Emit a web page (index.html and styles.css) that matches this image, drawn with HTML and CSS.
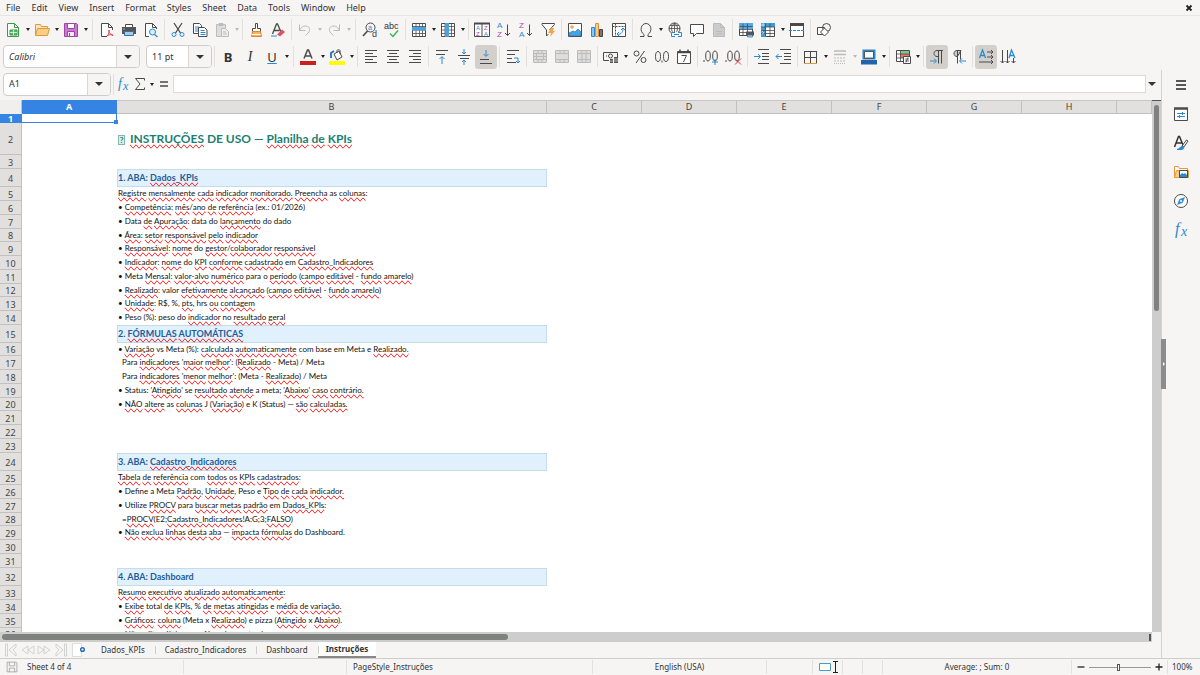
FILE: index.html
```html
<!DOCTYPE html>
<html lang="pt-BR">
<head>
<meta charset="utf-8">
<title>Planilha de KPIs</title>
<link rel="stylesheet" href="styles.css">
</head>
<body>
<header class="menubar">
  <nav class="menus">
    <button>File</button><button>Edit</button><button>View</button><button>Insert</button><button>Format</button><button>Styles</button><button>Sheet</button><button>Data</button><button>Tools</button><button>Window</button><button>Help</button>
  </nav>
  <button class="close" aria-label="Close document"><svg viewBox="0 0 8 8"><path d="M1.500 1.500l5 5M6.500 1.500l-5 5" stroke="#222" stroke-width="1.800"/></svg></button>
</header>

<div class="toolbar">
  <button class="tool" aria-label="New"><svg viewBox="0 0 16 16"><path d="M2.500 1.500h7l4 4v9h-11z" fill="#fff" stroke="#3a9a4a"/><path d="M9.500 1.500v4h4" stroke="#3a9a4a"/><path d="M5 8h7v5H5z" fill="#5cb56a" stroke="#3a9a4a"/><path d="M5 10.500h7M8.500 8v5" stroke="#fff" stroke-width=".7"/></svg></button><button class="drop" aria-label="New options"></button>
  <button class="tool" aria-label="Open"><svg viewBox="0 0 16 16"><path d="M1.500 13.500v-11h5l1 2h6v2" fill="#fbe3b6" stroke="#dd9a3c"/><path d="M1.500 13.500l2-7h12l-2 7z" fill="#f9cf87" stroke="#dd9a3c"/></svg></button><button class="drop" aria-label="Open options"></button>
  <button class="tool" aria-label="Save"><svg viewBox="0 0 16 16"><path d="M1.500 1.500h12l1 1v12h-13z" fill="#c77ad0" stroke="#9b45a8"/><path d="M4.500 1.500h7v5h-7z" fill="#fff" stroke="#9b45a8"/><path d="M4.500 9.500h7v5h-7z" fill="#f5e6f7" stroke="#9b45a8"/><path d="M6.500 11v3.500" stroke="#9b45a8"/></svg></button><button class="drop" aria-label="Save options"></button>
  <span class="sep wide"></span>
  <button class="tool" aria-label="Export as PDF"><svg viewBox="0 0 16 16"><path d="M8 14.500H2.500v-13h7l4 4V8" fill="#fff"/><path d="M9.500 1.500v4h4"/><path d="M8 14c2-2 3-6 2-6s0 4 4 5.500c1-1-4-1.500-6 .5z" stroke="#d9414e"/></svg></button>
  <button class="tool" aria-label="Print"><svg viewBox="0 0 16 16"><path d="M4.500 5V2.500h7V5" fill="#fff"/><path d="M1 5h14v7H1z" fill="#555" stroke="none"/><path d="M3.500 9.500h9v4h-9z" fill="#9fcdf0" stroke="#3d6f99"/><path d="M2.500 7h1" stroke="#fff"/></svg></button>
  <button class="tool" aria-label="Print preview"><svg viewBox="0 0 16 16"><path d="M6 14.500H2.500v-13h7l4 4V7" fill="#fff"/><path d="M9.500 1.500v4h4"/><circle cx="9.500" cy="10" r="3" fill="#d8ecfa" stroke="#2a8ad0"/><path d="M11.500 12.500l3 2.500" stroke="#2a8ad0" stroke-width="1.300"/></svg></button>
  <span class="sep"></span>
  <button class="tool" aria-label="Cut"><svg viewBox="0 0 16 16"><path d="M4 1l6.500 10M12 1L5.500 11" stroke-width="1.300"/><circle cx="4" cy="12.500" r="2" stroke="#2a8ad0"/><circle cx="12" cy="12.500" r="2" stroke="#2a8ad0"/></svg></button>
  <button class="tool" aria-label="Copy"><svg viewBox="0 0 16 16"><path d="M1.500 1.500h6l2 2v8h-8z" fill="#fff"/><path d="M3 5h4M3 7h3M3 9h3" stroke="#2a8ad0"/><path d="M6.500 5.500h6l2.500 2.500v6.500H6.500z" fill="#fff"/><path d="M8.500 8.500h4M8.500 10.500h5M8.500 12.500h5" stroke="#2a8ad0"/></svg></button>
  <button class="tool off" aria-label="Paste" disabled><svg viewBox="0 0 16 16"><path d="M7 14.500H2.500v-12h9V6" fill="#ddd"/><path d="M5 1.500h4v2H5z" fill="#bbb"/><path d="M7.500 6.500h4l3 3v5h-7z" fill="#eee"/><path d="M9 10h3M9 12h4"/></svg></button><button class="drop off" aria-label="Paste options" disabled></button>
  <span class="sep"></span>
  <button class="tool" aria-label="Clone formatting"><svg viewBox="0 0 16 16"><path d="M7.500 1.500h2v5h3v3h-8v-3h3z" fill="#fff"/><path d="M4.500 9.500h8l1 5h-10z" fill="#f7b267" stroke="#d98a2b"/><path d="M3.500 12.500h9" stroke="#fff"/></svg></button>
  <button class="tool" aria-label="Clear formatting"><svg viewBox="0 0 16 16"><path d="M2.500 12L6.500 2h1L11 10M4 8.500h5.500" stroke-width="1.300"/><path d="M1 14h6" stroke="#2a8ad0"/><path d="M7 12.500l5-5 3 2.500-5 4.500z" fill="#e05260" stroke="none"/></svg></button>
  <span class="sep"></span>
  <button class="tool off" aria-label="Undo" disabled><svg viewBox="0 0 16 16"><path d="M2.500 2.500v6h6M2.500 8.500c2-6 11-6 10 0-.3 2-2 3-4 5"/></svg></button><button class="drop off" aria-label="Undo history" disabled></button>
  <button class="tool off" aria-label="Redo" disabled><svg viewBox="0 0 16 16"><path d="M13.500 2.500v6h-6M13.500 8.500c-2-6-11-6-10 0 .3 2 2 3 4 5"/></svg></button><button class="drop off" aria-label="Redo history" disabled></button>
  <span class="sep wide"></span>
  <button class="tool" aria-label="Find and replace"><svg viewBox="0 0 16 16"><circle cx="8.500" cy="5.500" r="4.500"/><path d="M5.500 9L1 14" stroke-width="1.600"/><text x="6" y="8" font-size="7" fill="#2a8ad0">a</text><text x="10" y="15" font-size="9" fill="#444">d</text></svg></button>
  <button class="tool" aria-label="Spelling"><svg viewBox="0 0 16 16"><text x="0" y="7" font-size="9" fill="#333">abc</text><path d="M6 11.500l3 3 5-6" stroke="#35b558" stroke-width="1.400"/></svg></button>
  <span class="sep"></span>
  <button class="tool" aria-label="Row"><svg viewBox="0 0 16 16"><path d="M1.500 1.500h13v13h-13z" fill="#fff"/><path d="M1.500 4.500h13M1.500 11.500h13M5 1.500v13M8.500 1.500v13M11.500 1.500v13M1.500 8h13" stroke-width=".8"/><path d="M1 5h14v3.500H1z" fill="#4aa3e0" stroke="none"/></svg></button><button class="drop" aria-label="Row options"></button>
  <button class="tool" aria-label="Column"><svg viewBox="0 0 16 16"><path d="M1.500 1.500h13v13h-13z" fill="#fff"/><path d="M1.500 4.500h13M1.500 11.500h13M5 1.500v13M8.500 1.500v13M11.500 1.500v13M1.500 8h13" stroke-width=".8"/><path d="M5 1h4v14H5z" fill="#4aa3e0" stroke="none"/></svg></button><button class="drop" aria-label="Column options"></button>
  <span class="sep"></span>
  <button class="tool" aria-label="Sort"><svg viewBox="0 0 16 16"><path d="M.500 1.500h15v13H.500zM8 2v12.500" fill="#fff"/><path d="M0 1.500h16" stroke-width="2"/><text x="2" y="8" font-size="6" fill="#2a8ad0">A</text><text x="2" y="14" font-size="6" fill="#a84bb5">Z</text><text x="10" y="8" font-size="6" fill="#a84bb5">Z</text><text x="10" y="14" font-size="6" fill="#2a8ad0">A</text></svg></button>
  <button class="tool" aria-label="Sort ascending"><svg viewBox="0 0 16 16"><text x="1" y="6" font-size="8" fill="#2a8ad0">A</text><text x="1" y="15" font-size="8" fill="#a84bb5">Z</text><path d="M11.500 2.500v11M9 11l2.500 2.500L14 11"/></svg></button>
  <button class="tool" aria-label="Sort descending"><svg viewBox="0 0 16 16"><text x="1" y="6" font-size="8" fill="#a84bb5">Z</text><text x="1" y="15" font-size="8" fill="#2a8ad0">A</text><path d="M11.500 2.500v11M9 11l2.500 2.500L14 11"/></svg></button>
  <button class="tool" aria-label="AutoFilter"><svg viewBox="0 0 16 16"><path d="M2 1.500h12.500v1L9.500 8M2 1.500v1L6.500 8v6l2-2" fill="#fff"/><path d="M11 6h3l-1 3h2l-5 6 1-4H8z" fill="#f5a54c" stroke="none"/></svg></button>
  <span class="sep"></span>
  <button class="tool" aria-label="Insert image"><svg viewBox="0 0 16 16"><path d="M1.500 1.500h13v13h-13z" fill="#fff"/><circle cx="5" cy="5" r="1.500" fill="#f5b55c" stroke="#e09a3c" stroke-width=".5"/><path d="M2 14v-3l4-2 2 1 3-3 3 3v4z" fill="#4aa3e0" stroke="#1d75b8" stroke-width=".7"/></svg></button>
  <button class="tool" aria-label="Insert chart"><svg viewBox="0 0 16 16"><path d="M2.500 5.500h3v9h-3z" fill="#8cc8f0" stroke="#2a8ad0"/><path d="M6.500 1.500h3v13h-3z" fill="#f9c98a" stroke="#dd913c"/><path d="M10.500 7.500h3v7h-3z" fill="#777" stroke="#444"/></svg></button>
  <button class="tool" aria-label="Pivot table"><svg viewBox="0 0 16 16"><path d="M1.500 1.500h13v13h-13z" fill="#fff"/><path d="M1.500 4.500h13M4.500 1.500v13" stroke-dasharray="2 1"/><path d="M6 12c3 1 6-1 6-5M10 8l2-2 2 2M8 10l-2 2 2 2" stroke="#2a8ad0"/></svg></button>
  <span class="sep"></span>
  <button class="tool" aria-label="Special character"><svg viewBox="0 0 16 16"><path d="M2 14.500h4v-2C1 9 3 1.500 8 1.500S15 9 10 12.500v2h4"/></svg></button><button class="drop" aria-label="Symbols"></button>
  <button class="tool" aria-label="Hyperlink"><svg viewBox="0 0 16 16"><circle cx="7.500" cy="6.500" r="5.500"/><path d="M2 6.500h11M7.500 1v10M3 3.500h9M7.500 1c-4 3-4 8 0 11M7.500 1c4 3 4 8 0 11" stroke-width=".8"/><path d="M4 10h11v5H4z" fill="#f6f5f4" stroke="none"/><path d="M8 10.500H4.500v4H8M11 10.500h3.500v4H11M7 12.500h5" stroke="#2a8ad0"/></svg></button>
  <button class="tool" aria-label="Comment"><svg viewBox="0 0 16 16"><path d="M1.500 2.500h13v9h-7l-3 3v-3h-3z" fill="#fff"/></svg></button>
  <button class="tool off" aria-label="Headers and footers" disabled><svg viewBox="0 0 16 16"><path d="M2.500 1.500h7l4 4v9h-11z" fill="#ccc"/><path d="M9.500 1.500v4h4M5 9.500h6M5 12h6"/></svg></button>
  <span class="sep"></span>
  <button class="tool" aria-label="Print area"><svg viewBox="0 0 16 16"><path d="M1.500 1.500h13v12h-13z" fill="#fff"/><path d="M1 1h14v6H1z" fill="#55aae5" stroke="none"/><path d="M1.500 4.500h13M1.500 7.500h13M1.500 10.500h13M5 1.500v12M9.500 1.500v12" stroke-width=".8"/><path d="M8 9.500h8v4H8z" fill="#555" stroke="none"/><path d="M9.500 13h5v2h-5z" fill="#9fcdf0" stroke="#3d6f99" stroke-width=".7"/></svg></button>
  <button class="tool" aria-label="Freeze rows and columns"><svg viewBox="0 0 16 16"><path d="M1.500 1.500h13v13h-13z" fill="#fff"/><path d="M1 1h14v4H6v10H1z" fill="#3d9bdc" stroke="none"/><path d="M1.500 5h13M1.500 8.500h13M1.500 11.500h13M5.500 1.500v13M10 1.500v13" stroke-width=".8"/><path d="M1 3h4M3 1v4M2 9l2 2M2 12l2-1" stroke="#fff" stroke-width=".6"/></svg></button><button class="drop" aria-label="Freeze options"></button>
  <button class="tool" aria-label="Split window"><svg viewBox="0 0 16 16"><path d="M1.500 2.500h13v12h-13z" fill="#fff"/><path d="M1 2.500h14" stroke-width="3"/><path d="M0 8.500h16" stroke="#2a8ad0" stroke-dasharray="3 1"/></svg></button>
  <span class="sep"></span>
  <button class="tool" aria-label="Draw functions"><svg viewBox="0 0 16 16"><path d="M1.500 5.500h7v7h-7z" fill="#fff"/><circle cx="10.500" cy="5.500" r="4"/><path d="M8.500 6l4 4-4 4-4-4z" fill="#fff"/></svg></button>
</div>

<div class="toolbar format">
  <div class="combo font"><input value="Calibri" aria-label="Font name"><button aria-label="Font list"></button></div>
  <div class="combo size"><input value="11 pt" aria-label="Font size"><button aria-label="Size list"></button></div>
  <span class="sep"></span>
  <button class="tool letter" aria-label="Bold"><b>B</b></button>
  <button class="tool letter" aria-label="Italic"><i>I</i></button>
  <button class="tool letter" aria-label="Underline"><u>U</u></button><button class="drop" aria-label="Underline options"></button>
  <span class="sep wide"></span>
  <button class="tool" aria-label="Font color"><svg viewBox="0 0 16 16"><path d="M4 9.500L7.500 1h1L12 9.500M5.500 7h5" stroke-width="1.500"/><path d="M0 12h16v4H0z" fill="#c9211e" stroke="none"/></svg></button><button class="drop" aria-label="Font color palette"></button>
  <button class="tool" aria-label="Highlighting"><svg viewBox="0 0 16 16"><path d="M2 9V4l3-2" stroke="#1d75b8" stroke-width="1.800"/><path d="M5 5l5-3 3 6-5 3zM8 4V1.500c0-1 3-1 3 0V5" fill="#fff"/><path d="M0 12h16v4H0z" fill="#ffff00" stroke="none"/></svg></button><button class="drop" aria-label="Highlighting palette"></button>
  <span class="sep"></span>
  <button class="tool" aria-label="Align left"><svg viewBox="0 0 16 16"><path d="M2 1.500h12M2 4.500h8M2 7.500h12M2 10.500h8M2 13.500h12"/></svg></button>
  <button class="tool" aria-label="Align center"><svg viewBox="0 0 16 16"><path d="M2 1.500h12M4 4.500h8M2 7.500h12M4 10.500h8M2 13.500h12"/></svg></button>
  <button class="tool" aria-label="Align right"><svg viewBox="0 0 16 16"><path d="M2 1.500h12M6 4.500h8M2 7.500h12M6 10.500h8M2 13.500h12"/></svg></button>
  <span class="sep"></span>
  <button class="tool" aria-label="Align top"><svg viewBox="0 0 16 16"><path d="M2 1.500h12M2 5.500h9"/><path d="M8 15V8M5.500 10L8 7.500l2.500 2.500" stroke="#2a8ad0"/></svg></button>
  <button class="tool" aria-label="Center vertically"><svg viewBox="0 0 16 16"><path d="M2 6.500h12M4 9.500h9"/><path d="M8 0v5M6 3l2 2 2-2M8 16v-5M6 13l2-2 2 2" stroke="#2a8ad0"/></svg></button>
  <button class="tool on" aria-label="Align bottom" aria-pressed="true"><svg viewBox="0 0 16 16"><path d="M2 10.500h9M2 14.500h12"/><path d="M8 1v6M5.500 5L8 7.500 10.500 5" stroke="#2a8ad0"/></svg></button>
  <span class="sep"></span>
  <button class="tool" aria-label="Wrap text"><svg viewBox="0 0 16 16"><path d="M2 1.500h12M2 5.500h8M2 9.500h5M2 13.500h9"/><path d="M9 9h4v5M11 12l2 2 2-2" stroke="#2a8ad0"/></svg></button>
  <span class="sep"></span>
  <button class="tool off" aria-label="Merge and center" disabled><svg viewBox="0 0 16 16"><path d="M1.500 1.500h13v12h-13z" fill="#ddd"/><path d="M1.500 4.500h13M1.500 7.500h13M1.500 10.500h13M6 1.500v3M10 1.500v3M6 10.500v3M10 10.500v3M4.500 4.500v6M11.500 4.500v6"/></svg></button>
  <button class="tool off" aria-label="Merge cells" disabled><svg viewBox="0 0 16 16"><path d="M1.500 1.500h13v12h-13z" fill="#ddd"/><path d="M1.500 4.500h13M1.500 10.500h13M6 1.500v3M10 1.500v3M6 10.500v3M10 10.500v3"/></svg></button>
  <button class="tool off" aria-label="Unmerge cells" disabled><svg viewBox="0 0 16 16"><path d="M1.500 1.500h13v12h-13z" fill="#ddd"/><path d="M1.500 4.500h13M1.500 10.500h13M6 1.500v12M10 1.500v12"/></svg></button>
  <span class="sep"></span>
  <button class="tool" aria-label="Format as currency"><svg viewBox="0 0 16 16"><path d="M6 11.500H.500v-8h14V8"/><circle cx="7.500" cy="7" r="2"/><path d="M3 7h1"/><path d="M7 10h3v4H7zM11 8h4v6h-4z" fill="#555" stroke="none"/><path d="M7 12h3M11 10h4M11 12h4" stroke="#f6f5f4" stroke-width=".6"/></svg></button><button class="drop" aria-label="Currency options"></button>
  <button class="tool" aria-label="Format as percent"><svg viewBox="0 0 16 16"><circle cx="4.500" cy="4.500" r="2.500"/><circle cx="11.500" cy="11" r="2.500"/><path d="M12.500 2L4 14"/></svg></button>
  <button class="tool" aria-label="Format as number"><svg viewBox="0 0 16 16"><ellipse cx="4" cy="7.500" rx="2.500" ry="5"/><ellipse cx="12" cy="7.500" rx="2.500" ry="5"/><path d="M8 11.500v2"/></svg></button>
  <button class="tool" aria-label="Format as date"><svg viewBox="0 0 16 16"><path d="M1.500 2.500h13v12h-13z" fill="#fff"/><path d="M1.500 3.500h13M4 .500v2M12 .500v2" stroke-width="1.500"/><path d="M5.500 6.500h5l-3 6.500"/></svg></button>
  <span class="sep"></span>
  <button class="tool" aria-label="Add decimal place"><svg viewBox="0 0 16 16"><ellipse cx="5" cy="7" rx="2.300" ry="5"/><ellipse cx="12" cy="7" rx="2.300" ry="5"/><path d="M1 11v2"/><path d="M12 10v6M9 13h6" stroke="#2a8ad0"/></svg></button>
  <button class="tool" aria-label="Delete decimal place"><svg viewBox="0 0 16 16"><ellipse cx="5" cy="7" rx="2.300" ry="5"/><ellipse cx="12" cy="7" rx="2.300" ry="5"/><path d="M1 11v2"/><path d="M10 9.500l6 6M16 9.500l-6 6" stroke="#e0343f"/></svg></button>
  <span class="sep wide"></span>
  <button class="tool" aria-label="Increase indent"><svg viewBox="0 0 16 16"><path d="M4 .500h11M8 4.500h7M8 7.500h7M8 10.500h7M4 14.500h11"/><path d="M0 7.500h6M4 5l2.500 2.500L4 10" stroke="#2a8ad0"/></svg></button>
  <button class="tool" aria-label="Decrease indent"><svg viewBox="0 0 16 16"><path d="M4 .500h11M8 4.500h7M8 7.500h7M8 10.500h7M4 14.500h11"/><path d="M0 7.500h6M2.500 5L0 7.500 2.500 10" stroke="#2a8ad0"/></svg></button>
  <span class="sep"></span>
  <button class="tool" aria-label="Borders"><svg viewBox="0 0 16 16"><path d="M1.500 2v12M13.500 2v12M1.500 2.500h12M7.500 2v12M1.500 8.500h12"/><path d="M1 14.500h13" stroke="#e8963c"/></svg></button><button class="drop" aria-label="Border options"></button>
  <button class="tool off" aria-label="Border style" disabled><svg viewBox="0 0 16 16"><path d="M2 2h12M2 5.500h12" stroke-width="1.600"/><path d="M2 9h12M2 12h12" stroke-dasharray="2 1"/><path d="M2 14.500h12" stroke-dasharray="1 1"/></svg></button><button class="drop off" aria-label="Border style options" disabled></button>
  <button class="tool" aria-label="Border color"><svg viewBox="0 0 16 16"><path d="M2.500 1.500h11v8h-11z" fill="#fff" stroke="#2a8ad0" stroke-width="2"/><path d="M3.500 2.500h9v7h-9z" stroke="#555"/><path d="M0 11h16v4.500H0z" fill="#2463a8" stroke="none"/></svg></button><button class="drop" aria-label="Border color palette"></button>
  <span class="sep"></span>
  <button class="tool" aria-label="Conditional formatting"><svg viewBox="0 0 16 16"><path d="M1.500 1.500h13v11h-13z" fill="#fff"/><path d="M5 2h9v3H5z" fill="#7cc88a" stroke="none"/><path d="M5 5h9v4H5z" fill="#e8746c" stroke="none"/><path d="M1.500 5h13M1.500 9h7M5.500 1.500v11" stroke-width=".8"/><path d="M8.500 7.500h7v7h-7z" fill="#fff"/><path d="M10 10h4M10 12h4M13 8.500l-2 5" stroke-width=".8"/></svg></button><button class="drop" aria-label="Conditional options"></button>
  <span class="sep"></span>
  <button class="tool on" aria-label="Left-to-right" aria-pressed="true"><svg viewBox="0 0 16 16"><path d="M14 1.500H8c-4 0-4 6 0 6h1M9.500 1.500v13M12.500 1.500v13"/><path d="M1 12h6M5 9.500L7.500 12 5 14.500" stroke="#2a8ad0"/></svg></button>
  <button class="tool" aria-label="Right-to-left"><svg viewBox="0 0 16 16"><path d="M10 1.500H6c-4 0-4 6 0 6h.500z" fill="#ccc"/><path d="M6.500 1.500v13M9.500 1.500v9"/><path d="M9 12h6M11 9.500L8.500 12l2.500 2.500" stroke="#2a8ad0"/></svg></button>
  <span class="sep"></span>
  <button class="tool on" aria-label="Text direction left to right" aria-pressed="true"><svg viewBox="0 0 16 16"><path d="M1.500 9L4.500 1 7.500 9M2.500 6.500h4" stroke="#2a8ad0" stroke-width="1.300"/><path d="M9 3h6M13 1l2 2-2 2M9 8h6M13 6l2 2-2 2M1 13h14M13 11l2 2-2 2"/></svg></button>
  <button class="tool" aria-label="Text direction top to bottom"><svg viewBox="0 0 16 16"><path d="M9 9l2.500-8L15 9M10 6.500h4" stroke="#2a8ad0" stroke-width="1.300"/><path d="M2.500 1v13M.500 12l2 2 2-2M7.500 1v13M5.500 12l2 2 2-2M13.500 9v5M11.500 12l2 2 2-2"/></svg></button>
</div>

<div class="work">
  <main class="document">
    <div class="formula">
      <div class="combo name"><input value="A1" aria-label="Name box"><button aria-label="Named ranges"></button></div>
      <span class="sep"></span>
      <button class="fx" aria-label="Function wizard"><svg viewBox="0 0 16 16"><text class="serif" x="2" y="12" font-size="14">f</text><text class="serif" x="7" y="14" font-size="12">x</text></svg></button>
      <button class="fx" aria-label="Select function"><svg viewBox="0 0 16 16"><path d="M12.500 4.500v-2h-9L8 8l-4.500 5.500h9v-2"/></svg></button><button class="drop" aria-label="Function list"></button>
      <button class="fx equal" aria-label="Formula"><svg viewBox="0 0 16 16"><path d="M4 6h8M4 10h8" stroke-width="1.500"/></svg></button>
      <input class="line" aria-label="Input line">
      <button class="drop big" aria-label="Expand formula bar"></button>
    </div>

    <div class="sheet">
      <div class="grid">
        <table>
          <colgroup><col class="c-num"><col class="c-std"><col class="c-text"><col class="c-std"><col class="c-std"><col class="c-std"><col class="c-std"><col class="c-std"><col class="c-std"><col></colgroup>
          <thead><tr><th class="corner"></th><th class="cur">A</th><th>B</th><th>C</th><th>D</th><th>E</th><th>F</th><th>G</th><th>H</th><th></th></tr></thead>
          <tbody>
          <tr class="first"><th class="cur">1</th><td class="active"><i class="handle"></i></td><td></td></tr>
          <tr class="title"><th>2</th><td></td><td><span class="tofu">?</span> <s>INSTRUÇÕES</s> DE USO — <s>Planilha</s> <s>de</s> <s>KPIs</s></td></tr>
          <tr><th>3</th><td></td><td></td></tr>
          <tr class="head"><th>4</th><td></td><td>1. ABA: <s>Dados_KPIs</s></td></tr>
          <tr><th>5</th><td></td><td><s>Registre</s> <s>mensalmente</s> <s>cada</s> <s>indicador</s> <s>monitorado.</s> <s>Preencha</s> as <s>colunas</s>:</td></tr>
          <tr><th>6</th><td></td><td>• <s>Competência</s>: <s>mês</s>/<s>ano</s> <s>de</s> <s>referência</s> (ex.: 01/2026)</td></tr>
          <tr><th>7</th><td></td><td>• Data <s>de</s> <s>Apuração</s>: data do <s>lançamento</s> do dado</td></tr>
          <tr><th>8</th><td></td><td>• <s>Área</s>: <s>setor</s> <s>responsável</s> <s>pelo</s> <s>indicador</s></td></tr>
          <tr><th>9</th><td></td><td>• <s>Responsável</s>: <s>nome</s> do <s>gestor</s>/<s>colaborador</s> <s>responsável</s></td></tr>
          <tr><th>10</th><td></td><td>• <s>Indicador</s>: <s>nome</s> do <s>KPI</s> <s>conforme</s> <s>cadastrado</s> em <s>Cadastro_Indicadores</s></td></tr>
          <tr><th>11</th><td></td><td>• Meta <s>Mensal</s>: <s>valor-alvo</s> <s>numérico</s> para o <s>período</s> (<s>campo</s> <s>editável</s> - <s>fundo</s> <s>amarelo</s>)</td></tr>
          <tr><th>12</th><td></td><td>• <s>Realizado</s>: valor <s>efetivamente</s> <s>alcançado</s> (<s>campo</s> <s>editável</s> - <s>fundo</s> <s>amarelo</s>)</td></tr>
          <tr><th>13</th><td></td><td>• <s>Unidade</s>: R$, %, <s>pts</s>, hrs <s>ou</s> <s>contagem</s></td></tr>
          <tr><th>14</th><td></td><td>• Peso (%): peso do <s>indicador</s> no <s>resultado</s> <s>geral</s></td></tr>
          <tr class="head"><th>15</th><td></td><td>2. <s>FÓRMULAS</s> <s>AUTOMÁTICAS</s></td></tr>
          <tr><th>16</th><td></td><td>• <s>Variação</s> vs Meta (%): <s>calculada</s> <s>automaticamente</s> com base em Meta e <s>Realizado.</s></td></tr>
          <tr><th>17</th><td></td><td class="sub">Para <s>indicadores</s> '<s>maior</s> <s>melhor</s>': (<s>Realizado</s> - Meta) / Meta</td></tr>
          <tr><th>18</th><td></td><td class="sub">Para <s>indicadores</s> '<s>menor</s> <s>melhor</s>': (Meta - <s>Realizado</s>) / Meta</td></tr>
          <tr><th>19</th><td></td><td>• Status: '<s>Atingido</s>' se <s>resultado</s> <s>atende</s> a meta; '<s>Abaixo</s>' <s>caso</s> <s>contrário.</s></td></tr>
          <tr><th>20</th><td></td><td>• <s>NÃO</s> <s>altere</s> as <s>colunas</s> J (<s>Variação</s>) e K (Status) — <s>são</s> <s>calculadas.</s></td></tr>
          <tr><th>21</th><td></td><td></td></tr>
          <tr><th>22</th><td></td><td></td></tr>
          <tr><th>23</th><td></td><td></td></tr>
          <tr class="head"><th>24</th><td></td><td>3. ABA: <s>Cadastro_Indicadores</s></td></tr>
          <tr><th>25</th><td></td><td><s>Tabela</s> <s>de</s> <s>referência</s> com <s>todos</s> <s>os</s> <s>KPIs</s> <s>cadastrados</s>:</td></tr>
          <tr><th>26</th><td></td><td>• Define a Meta <s>Padrão</s>, <s>Unidade</s>, Peso e <s>Tipo</s> <s>de</s> <s>cada</s> <s>indicador.</s></td></tr>
          <tr><th>27</th><td></td><td>• Utilize <s>PROCV</s> para <s>buscar</s> <s>metas</s> <s>padrão</s> em <s>Dados_KPIs</s>:</td></tr>
          <tr><th>28</th><td></td><td class="sub">=<s>PROCV</s>(E2;<s>Cadastro_Indicadores</s>!A:G;3;<s>FALSO</s>)</td></tr>
          <tr><th>29</th><td></td><td>• <s>Não</s> <s>exclua</s> <s>linhas</s> <s>desta</s> <s>aba</s> — <s>impacta</s> <s>fórmulas</s> do Dashboard.</td></tr>
          <tr><th>30</th><td></td><td></td></tr>
          <tr><th>31</th><td></td><td></td></tr>
          <tr class="head"><th>32</th><td></td><td>4. ABA: Dashboard</td></tr>
          <tr><th>33</th><td></td><td><s>Resumo</s> <s>executivo</s> <s>atualizado</s> <s>automaticamente</s>:</td></tr>
          <tr><th>34</th><td></td><td>• <s>Exibe</s> total <s>de</s> <s>KPIs</s>, % <s>de</s> <s>metas</s> <s>atingidas</s> e <s>média</s> <s>de</s> <s>variação.</s></td></tr>
          <tr><th>35</th><td></td><td>• <s>Gráficos</s>: <s>coluna</s> (Meta x <s>Realizado</s>) e pizza (<s>Atingido</s> x <s>Abaixo</s>).</td></tr>
          <tr><th>36</th><td></td><td>• <s>Não</s> edite <s>células</s> com <s>fórmulas</s> <s>nesta</s> <s>aba.</s></td></tr>
          </tbody>
        </table>
      </div>
      <div class="vscroll"><div class="thumb"></div></div>
    </div>
    <div class="hscroll"><div class="thumb"></div><span class="split"></span></div>

    <div class="tabs">
      <div class="navs">
        <button aria-label="First sheet"><svg viewBox="0 0 16 16"><path d="M1.500 2v12h2V2zM12 2L5 8l7 6v-3L9 8l3-3z"/></svg></button>
        <button aria-label="Previous sheet"><svg viewBox="0 0 16 16"><path d="M8 4L2 8l6 4zM14 4L8 8l6 4z"/></svg></button>
        <button aria-label="Next sheet"><svg viewBox="0 0 16 16"><path d="M8 4l6 4-6 4zM2 4l6 4-6 4z"/></svg></button>
        <button aria-label="Last sheet"><svg viewBox="0 0 16 16"><path d="M12.500 2v12h2V2zM4 2l7 6-7 6v-3l3-3-3-3z"/></svg></button>
      </div>
      <button class="add" aria-label="Add sheet"><svg viewBox="0 0 16 16"><path d="M2.500 1.500h9v13h-9z" fill="#fff" stroke="#ddd"/><circle cx="12.500" cy="7.500" r="1.800" fill="#fff" stroke="#2a6ab8" stroke-width="1.500"/></svg></button>
      <button class="tab">Dados_KPIs</button><button class="tab">Cadastro_Indicadores</button><button class="tab">Dashboard</button><button class="tab sel">Instruções</button>
    </div>
  </main>
  <aside class="sidebar">
    <button aria-label="Sidebar settings"><svg viewBox="0 0 16 16"><path d="M3 4h10M3 8h10M3 12h10" stroke="#222" stroke-width="1.400"/></svg></button>
    <button aria-label="Properties"><svg viewBox="0 0 16 16"><path d="M1.500 2.500h13v12h-13z" fill="#fff"/><path d="M1 2.500h14" stroke-width="2.500"/><path d="M4 7.500h8M4 10.500h8" stroke="#2a8ad0"/><path d="M9.500 6v3M6.500 9v3" stroke="#2a8ad0"/></svg></button>
    <button aria-label="Styles"><svg viewBox="0 0 16 16"><path d="M1.500 12L5.500 1.500h1L10 10M3 8h6" stroke="#333" stroke-width="1.500"/><path d="M9 11l4.500-6 1.500 1-4 6z" fill="#fff"/><path d="M4 14.500c3-.5 3-3 5-3s3 3-1 3z" fill="#2a8ad0" stroke="#2a8ad0"/></svg></button>
    <button aria-label="Gallery"><svg viewBox="0 0 16 16"><path d="M1.500 13.500v-11h4l1 2h8v2" fill="#fff" stroke="#e8963c"/><path d="M1.500 13.500l2-7h12v7z" fill="#f9cf87" stroke="#e8963c"/><path d="M6.500 6.500h8v7h-8z" fill="#fff"/><path d="M7 13v-2l2-2 2 1 1-1 2 2v2z" fill="#2a8ad0" stroke="none"/></svg></button>
    <button aria-label="Navigator"><svg viewBox="0 0 16 16"><circle cx="8" cy="8" r="6.500" fill="#fff"/><path d="M11.500 4.500l-2 5-5 2 2-5z" fill="#2a8ad0" stroke="#2a8ad0" stroke-width=".6"/><circle cx="8" cy="8" r="1" fill="#fff" stroke="none"/></svg></button>
    <button aria-label="Functions"><svg viewBox="0 0 16 16"><text class="serif" x="2" y="12" font-size="16">f</text><text class="serif" x="8" y="14" font-size="14">x</text></svg></button>
    <button class="grip" aria-label="Hide sidebar"></button>
  </aside>
</div>

<footer class="status">
  <span class="f-save"><svg viewBox="0 0 16 16"><path d="M1.500 1.500h12l1 1v12h-13zM4.500 1.500v5h7v-5M4.500 14.500v-5h7v5" stroke="#999"/></svg></span>
  <span class="f-sheet">Sheet 4 of 4</span>
  <span class="f-gap"></span>
  <span class="f-style">PageStyle_Instruções</span>
  <span class="f-lang">English (USA)</span>
  <span class="f-ins"></span>
  <span class="f-sel"><svg viewBox="0 0 20 16"><path d="M1.500 4.500h11v7h-11z" fill="#fff" stroke="#4a9ac4"/><path d="M15 2.500h5M17.500 2.500v11M15 13.500h5" stroke="#222"/></svg></span>
  <span class="f-small"></span>
  <span class="f-small"></span>
  <span class="f-sum">Average: ; Sum: 0</span>
  <span class="f-zoom"><button aria-label="Zoom out"><svg viewBox="0 0 8 8"><path d="M.500 4h7" stroke="#222" stroke-width="1.300"/></svg></button><input type="range" value="48" aria-label="Zoom"><button aria-label="Zoom in"><svg viewBox="0 0 8 8"><path d="M.500 4h7M4 .500v7" stroke="#222" stroke-width="1.300"/></svg></button></span>
  <span class="f-pct">100%</span>
</footer>
</body>
</html>
```
FILE: styles.css
```css
* { box-sizing: border-box; }
body {
  margin: 0;
  height: 100vh;
  display: flex;
  flex-direction: column;
  overflow: hidden;
  background: #f6f5f4;
  color: #333;
  font: 9px/12px "Noto Sans", sans-serif;
}
button, input { font: inherit; color: inherit; margin: 0; padding: 0; border: 0; background: none; }
button { display: flex; align-items: center; justify-content: center; flex: none; }
input { min-width: 0; outline: 0; }
svg { width: 16px; height: 16px; fill: none; stroke: #4a4a4a; flex: none; display: block; overflow: visible; }
svg text { stroke: none; font-family: "Liberation Sans", sans-serif; }
svg text.serif { font-family: "Liberation Serif", serif; font-style: italic; fill: #2a8ad0; }

/* menu bar */
.menubar { display: flex; justify-content: space-between; height: 16px; padding: 0 7px 0 6px; border-bottom: 1px solid #e8e6e4; }
.menus { display: flex; gap: 11px; }
.close svg { width: 8px; height: 8px; }

/* toolbars */
.toolbar { display: flex; align-items: center; height: 27px; padding-left: 2px; }
.toolbar.format { padding-left: 3px; }
.tool { width: 22px; height: 24px; border-radius: 3px; }
.tool.on { background: #d3d0cc; }
.off svg { stroke: #bbb; }
.drop { width: 7px; height: 24px; }
.drop::after { content: ""; border: 2px solid transparent; border-top: 3px solid #222; border-bottom: 0; }
.drop.off::after { border-top-color: #bbb; }
.drop.big { width: 12px; }
.drop.big::after, .combo button::after { content: ""; border: 4px solid transparent; border-top: 4px solid #333; border-bottom: 0; }
.sep { width: 5px; height: 21px; flex: none; display: flex; justify-content: center; }
.sep.wide { width: 7px; }
.sep::after { content: ""; width: 1px; background: #e2e0dd; }
.letter { font-size: 13px; }
.letter i { font-family: "Liberation Serif", serif; font-size: 14px; }
.letter u { text-decoration-color: #2a8ad0; }

.combo { display: flex; height: 23px; border: 1px solid #cfccc9; border-radius: 4px; background: #fff; overflow: hidden; flex: none; }
.combo input { flex: 1; padding-left: 5px; }
.combo button { width: 23px; background: #f6f5f4; border-left: 1px solid #d9d6d3; }
.font { width: 137px; margin-right: 6px; }
.font input { font-style: italic; }
.size { width: 66px; }
.name { width: 108px; }

/* document area */
.work { flex: 1; display: flex; min-height: 0; }
.document { flex: 1; min-width: 0; display: flex; flex-direction: column; }
.formula { display: flex; align-items: center; height: 30px; padding: 0 3px 2px; flex: none; }
.fx { width: 16px; }
.equal { margin: 0 1px; }
.line { flex: 1; height: 18px; background: #fff; border: 1px solid #dddbd8; }

.sheet { flex: 1; display: flex; min-height: 0; background: #fff; }
.grid { flex: 1; min-width: 0; overflow: hidden; }
table { width: 100%; table-layout: fixed; border-collapse: separate; border-spacing: 0; }
.c-num { width: 22px; }
.c-std { width: 95px; }
.c-text { width: 430px; }
th, td { padding: 0; white-space: nowrap; }
th { font-weight: 400; background: #e1e0df; color: #444; border: solid #c3c1bf; border-width: 0 1px 1px 0; }
thead tr { height: 14px; }
thead th { border-top: 1px solid #c8c6c4; }
thead .corner { background: #f0efee; border-color: transparent #c3c1bf transparent transparent; }
th.cur { background: #3584e4; color: #fff; font-weight: 700; border-color: #3584e4; }
tbody th { line-height: 10px; padding-top: 2px; }
tbody tr { height: 14px; }
tbody tr:nth-child(4n) { height: 13px; }
td { font-family: Lato, sans-serif; font-size: 8px; line-height: 11px; color: #111; padding: 0 1px 1px; }
td.sub { padding-left: 5px; }
tbody tr.first { height: 9px; }
.first th { line-height: 6px; padding-top: 1px; }
.first td { line-height: 6px; padding: 0; }
.active { position: relative; border: solid #3584e4; border-width: 0 1px 1px 0; }
.handle { position: absolute; right: -2px; bottom: -2px; width: 4px; height: 4px; background: #3584e4; }
tbody tr.title { height: 32px; }
.title td { font-size: 12px; line-height: 14px; font-weight: 700; color: #1a7f72; padding-bottom: 1px; }
tbody tr.head { height: 18px; }
.head td:last-child { background: #e1f0fd; border: 1px solid #c5dcec; color: #1f5c99; font-size: 9px; font-weight: 700; padding: 0 0 1px; }
s { text-decoration: spelling-error; }
.tofu { display: inline-block; width: 7px; height: 10px; margin-right: 2px; border: 1px solid #7fb8b0; background: #dceeea; font-size: 8px; line-height: 8px; text-align: center; }

.vscroll { width: 9px; background: #cdcdcd; padding: 4px 2px 0; border-top: 1px solid #555; }
.vscroll .thumb { width: 5px; height: 206px; border-radius: 3px; background: #7f807f; }
.hscroll { display: flex; align-items: center; height: 10px; margin-right: 9px; padding-left: 2px; background: #cdcdcd; flex: none; }
.hscroll .thumb { width: 44%; height: 6px; border-radius: 3px; background: #7f817f; }
.split { width: 2px; height: 7px; margin: 0 1px 0 auto; background: #555; }

.tabs { display: flex; height: 16px; padding-left: 4px; flex: none; font-size: 8px; }
.navs { display: flex; width: 64px; }
.navs svg { stroke: #d2d2d2; }
.add { margin: 0 5px 0 2px; }
.tab { padding: 0 10px; position: relative; }
.tab + .tab::before { content: ""; width: 1px; height: 8px; background: #d0cecb; position: absolute; left: 0; top: 4px; }
.tab.sel { padding: 0 8px; background: #fff; font-weight: 700; border-bottom: 2px solid #888; }

/* sidebar */
.sidebar { width: 39px; position: relative; display: flex; flex-direction: column; align-items: center; gap: 13px; padding-top: 7px; border-left: 1px solid #d5d3d0; }
.grip { position: absolute; left: -1px; top: 269px; width: 5px; height: 50px; background: #8c8c8c; }
.grip::after { content: ""; border: 2px solid transparent; border-left-color: #fff; border-right: 0; }

/* status bar */
.status { display: flex; align-items: center; height: 17px; border-top: 1px solid #d0cecb; font-size: 8px; flex: none; }
.status > span { height: 14px; display: flex; align-items: center; border-right: 1px solid #e2e0dd; }
.status .f-save { width: 23px; padding-left: 6px; border: 0; }
.f-save svg { width: 12px; height: 12px; }
.f-sheet { width: 161px; padding-left: 4px; }
.f-gap { width: 163px; }
.f-style { flex: 1; padding-left: 6px; }
.f-lang { width: 174px; justify-content: center; }
.f-ins { width: 46px; }
.f-sel { width: 30px; padding-left: 5px; }
.f-sel svg { width: 20px; }
.f-small { width: 20px; }
.f-sum { width: 189px; justify-content: center; }
.f-zoom { width: 96px; padding: 0 4px 0 5px; gap: 4px; }
.f-zoom svg { width: 8px; height: 8px; }
.f-zoom input { flex: 1; height: 12px; appearance: none; }
.f-zoom input::-webkit-slider-runnable-track { height: 1px; background: #999; }
.f-zoom input::-webkit-slider-thumb { appearance: none; width: 3px; height: 7px; margin-top: -3px; border: 1px solid #555; background: #fff; }
.status .f-pct { width: 32px; padding-left: 4px; border: 0; }
```
